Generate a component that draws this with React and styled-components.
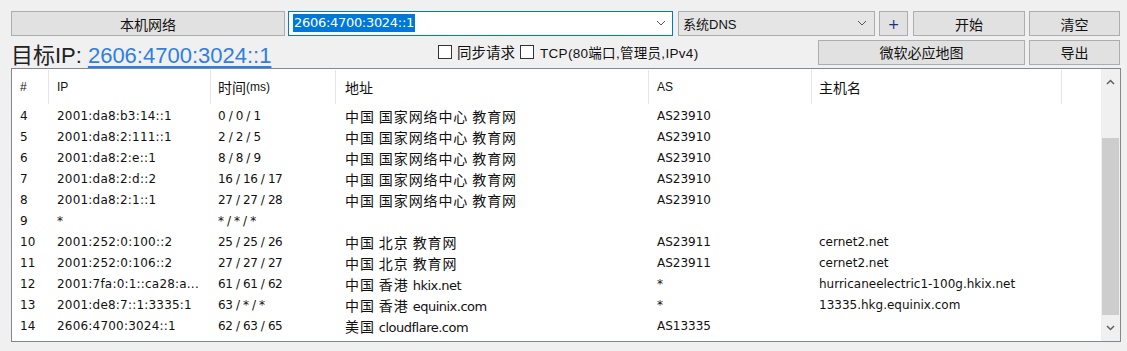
import React from 'react';
import styled, { createGlobalStyle } from 'styled-components';

const GlobalStyle = createGlobalStyle`
  html, body {
    margin: 0;
    padding: 0;
    background: #f0f0f0;
  }
  body {
    font-family: "Noto Sans", "Noto Sans CJK SC", sans-serif;
    color: #000;
  }
`;

const UI_FONT = `"Liberation Sans", "Noto Sans CJK SC", sans-serif`;

const Window = styled.div`
  width: 1127px;
  height: 351px;
  box-sizing: border-box;
  padding: 10px 7px 0 11px;
  display: flex;
  flex-direction: column;
  font-family: ${UI_FONT};
  overflow: hidden;
`;

const Toolbar = styled.div`
  display: flex;
  align-items: center;
  height: 26px;
`;

const Button = styled.div`
  box-sizing: border-box;
  width: ${({ w }) => w}px;
  height: 25px;
  margin-left: ${({ ml }) => ml || 0}px;
  margin-top: 1px;
  background: #e1e1e1;
  border: 1px solid #adadad;
  display: flex;
  align-items: center;
  justify-content: center;
  font-size: 14px;
  color: #111;
  flex-shrink: 0;
`;

const Plus = styled.span`
  color: #1c2f80;
  font-size: 14px;
  font-family: "DejaVu Sans", sans-serif;
`;

const Input = styled.div`
  box-sizing: border-box;
  width: 385px;
  height: 25px;
  margin-left: 3px;
  border: 1px solid #0078d7;
  background: #fff;
  display: flex;
  align-items: center;
  padding: 0 6px 0 4px;
`;

const Selected = styled.span`
  background: #0078d7;
  color: #fff;
  font-size: 13px;
  line-height: 18px;
  padding: 0 1px;
  font-family: "DejaVu Sans", sans-serif;
  letter-spacing: -0.3px;
`;

const Chevron = ({ color = '#555' }) => (
  <svg width="10" height="6" viewBox="0 0 10 6">
    <path d="M1 1 L5 5 L9 1" fill="none" stroke={color} strokeWidth="1" />
  </svg>
);

const ChevronSlot = styled.span`
  margin-left: auto;
  display: flex;
  align-items: center;
`;

const Select = styled.div`
  box-sizing: border-box;
  width: 197px;
  height: 25px;
  margin-left: 5px;
  border: 1px solid #acacac;
  background: #e5e5e5;
  display: flex;
  align-items: center;
  padding: 0 7px 0 4px;
  font-size: 13px;
  color: #111;
`;

const SecondRow = styled.div`
  display: flex;
  align-items: center;
  height: 31px;
`;

const Target = styled.div`
  font-size: 22px;
  color: #222;
  width: 420px;
  margin-top: 2px;
  white-space: nowrap;
`;

const TargetLink = styled.a`
  color: #2f7fe0;
  text-decoration: underline;
  text-underline-offset: 3px;
  margin-left: 6px;
`;

const Check = styled.label`
  display: flex;
  align-items: center;
  margin-left: ${({ ml }) => ml}px;
  font-size: ${({ small }) => (small ? 13.5 : 14.5)}px;
  letter-spacing: ${({ small }) => (small ? '0.3px' : '0')};
  color: #111;
  white-space: nowrap;
`;

const Box = styled.span`
  box-sizing: border-box;
  width: 14px;
  height: 14px;
  border: 1px solid #333;
  background: #fff;
  margin-right: ${({ gap }) => gap}px;
`;

const Spacer = styled.div`
  flex: 1;
`;

const Table = styled.div`
  margin-top: 1px;
  box-sizing: border-box;
  width: 1110px;
  height: 274px;
  border: 1px solid #828790;
  background: #fff;
  display: flex;
`;

const TableBody = styled.div`
  flex: 1;
  overflow: hidden;
`;

const COLS = '37px 162px 125px 313px 163px 250px 1fr';

const HeaderRow = styled.div`
  display: grid;
  grid-template-columns: ${COLS};
  height: 35px;
  margin-bottom: 1px;
`;

const HeaderCell = styled.div`
  display: flex;
  align-items: center;
  padding-left: ${({ pl }) => pl}px;
  font-size: ${({ cjk }) => (cjk ? 14 : 12)}px;
  border-right: ${({ last }) => (last ? 'none' : '1px solid #e5e5e5')};
  margin: 1px 0 0;
  color: #111;
`;

const Ms = styled.span`
  font-size: 12px;
`;

const Row = styled.div`
  display: grid;
  grid-template-columns: ${COLS};
  height: 21px;
  align-items: center;
`;

const Cell = styled.div`
  padding-left: ${({ pl }) => pl}px;
  font-size: 12px;
  white-space: nowrap;
  overflow: hidden;
  color: #111;
  font-family: "DejaVu Sans", "Noto Sans CJK SC", sans-serif;
  letter-spacing: ${({ ls = 0 }) => ls}px;
`;

const Region = styled.span`
  font-family: "Noto Sans CJK SC", sans-serif;
  font-size: 14px;
  letter-spacing: 0.9px;
  margin-right: 4px;
`;

const Domain = styled.span`
  font-family: "DejaVu Sans", sans-serif;
  font-size: 13px;
  letter-spacing: -0.5px;
`;

const Scrollbar = styled.div`
  width: 19px;
  background: #f0f0f0;
  display: flex;
  flex-direction: column;
  align-items: center;
`;

const ArrowBtn = styled.div`
  height: 29px;
  display: flex;
  align-items: center;
  justify-content: center;
  width: 100%;
`;

const Track = styled.div`
  flex: 1;
  width: 100%;
  display: flex;
  flex-direction: column;
`;

const Thumb = styled.div`
  margin-top: 42px;
  height: 177px;
  width: 17px;
  margin-left: 1px;
  background: #cdcdcd;
`;

const pad = [8, 8, 7, 9, 8, 7, 0];

const NIC = '中国 国家网络中心 教育网';

// [#, ip, time, region, domain, as, host]
const rows = [
  ['4', '2001:da8:b3:14::1', '0 / 0 / 1', NIC, '', 'AS23910', ''],
  ['5', '2001:da8:2:111::1', '2 / 2 / 5', NIC, '', 'AS23910', ''],
  ['6', '2001:da8:2:e::1', '8 / 8 / 9', NIC, '', 'AS23910', ''],
  ['7', '2001:da8:2:d::2', '16 / 16 / 17', NIC, '', 'AS23910', ''],
  ['8', '2001:da8:2:1::1', '27 / 27 / 28', NIC, '', 'AS23910', ''],
  ['9', '*', '* / * / *', '', '', '', ''],
  ['10', '2001:252:0:100::2', '25 / 25 / 26', '中国 北京 教育网', '', 'AS23911', 'cernet2.net'],
  ['11', '2001:252:0:106::2', '27 / 27 / 27', '中国 北京 教育网', '', 'AS23911', 'cernet2.net'],
  ['12', '2001:7fa:0:1::ca28:a...', '61 / 61 / 62', '中国 香港', 'hkix.net', '*', 'hurricaneelectric1-100g.hkix.net'],
  ['13', '2001:de8:7::1:3335:1', '63 / * / *', '中国 香港', 'equinix.com', '*', '13335.hkg.equinix.com'],
  ['14', '2606:4700:3024::1', '62 / 63 / 65', '美国', 'cloudflare.com', 'AS13335', ''],
];

const App = () => {
  return (
    <>
      <GlobalStyle />
      <Window>
        <Toolbar>
          <Button w={274}>本机网络</Button>
          <Input>
            <Selected>2606:4700:3024::1</Selected>
            <ChevronSlot><Chevron /></ChevronSlot>
          </Input>
          <Select>
            系统DNS
            <ChevronSlot><Chevron /></ChevronSlot>
          </Select>
          <Button w={29} ml={4}><Plus>+</Plus></Button>
          <Button w={112} ml={5}>开始</Button>
          <Button w={91} ml={4}>清空</Button>
        </Toolbar>

        <SecondRow>
          <Target>
            目标IP:
            <TargetLink>2606:4700:3024::1</TargetLink>
          </Target>
          <Check ml={7}><Box gap={5} />同步请求</Check>
          <Check ml={5} small><Box gap={6} />TCP(80端口,管理员,IPv4)</Check>
          <Spacer />
          <Button w={207}>微软必应地图</Button>
          <Button w={91} ml={4}>导出</Button>
        </SecondRow>

        <Table>
          <TableBody>
            <HeaderRow>
              <HeaderCell pl={pad[0]}>#</HeaderCell>
              <HeaderCell pl={pad[1]}>IP</HeaderCell>
              <HeaderCell pl={pad[2]} cjk>时间<Ms>(ms)</Ms></HeaderCell>
              <HeaderCell pl={pad[3]} cjk>地址</HeaderCell>
              <HeaderCell pl={pad[4]}>AS</HeaderCell>
              <HeaderCell pl={pad[5]} cjk>主机名</HeaderCell>
              <HeaderCell pl={0} last />
            </HeaderRow>
            {rows.map((r) => (
              <Row key={r[0]}>
                <Cell pl={pad[0]}>{r[0]}</Cell>
                <Cell pl={pad[1]} ls={0.2}>{r[1]}</Cell>
                <Cell pl={pad[2]} ls={-0.4}>{r[2]}</Cell>
                <Cell pl={pad[3]}>
                  {r[3] && <Region>{r[3]}</Region>}
                  {r[4] && <Domain>{r[4]}</Domain>}
                </Cell>
                <Cell pl={pad[4]}>{r[5]}</Cell>
                <Cell pl={pad[5]}>{r[6]}</Cell>
                <Cell pl={0} />
              </Row>
            ))}
          </TableBody>
          <Scrollbar>
            <ArrowBtn>
              <svg width="9" height="6" viewBox="0 0 9 6"><path d="M1 5 L4.5 1.5 L8 5" fill="none" stroke="#606060" strokeWidth="1.5" /></svg>
            </ArrowBtn>
            <Track>
              <Thumb />
            </Track>
            <ArrowBtn>
              <svg width="9" height="6" viewBox="0 0 9 6"><path d="M1 1 L4.5 4.5 L8 1" fill="none" stroke="#606060" strokeWidth="1.5" /></svg>
            </ArrowBtn>
          </Scrollbar>
        </Table>
      </Window>
    </>
  );
};

export default App;
